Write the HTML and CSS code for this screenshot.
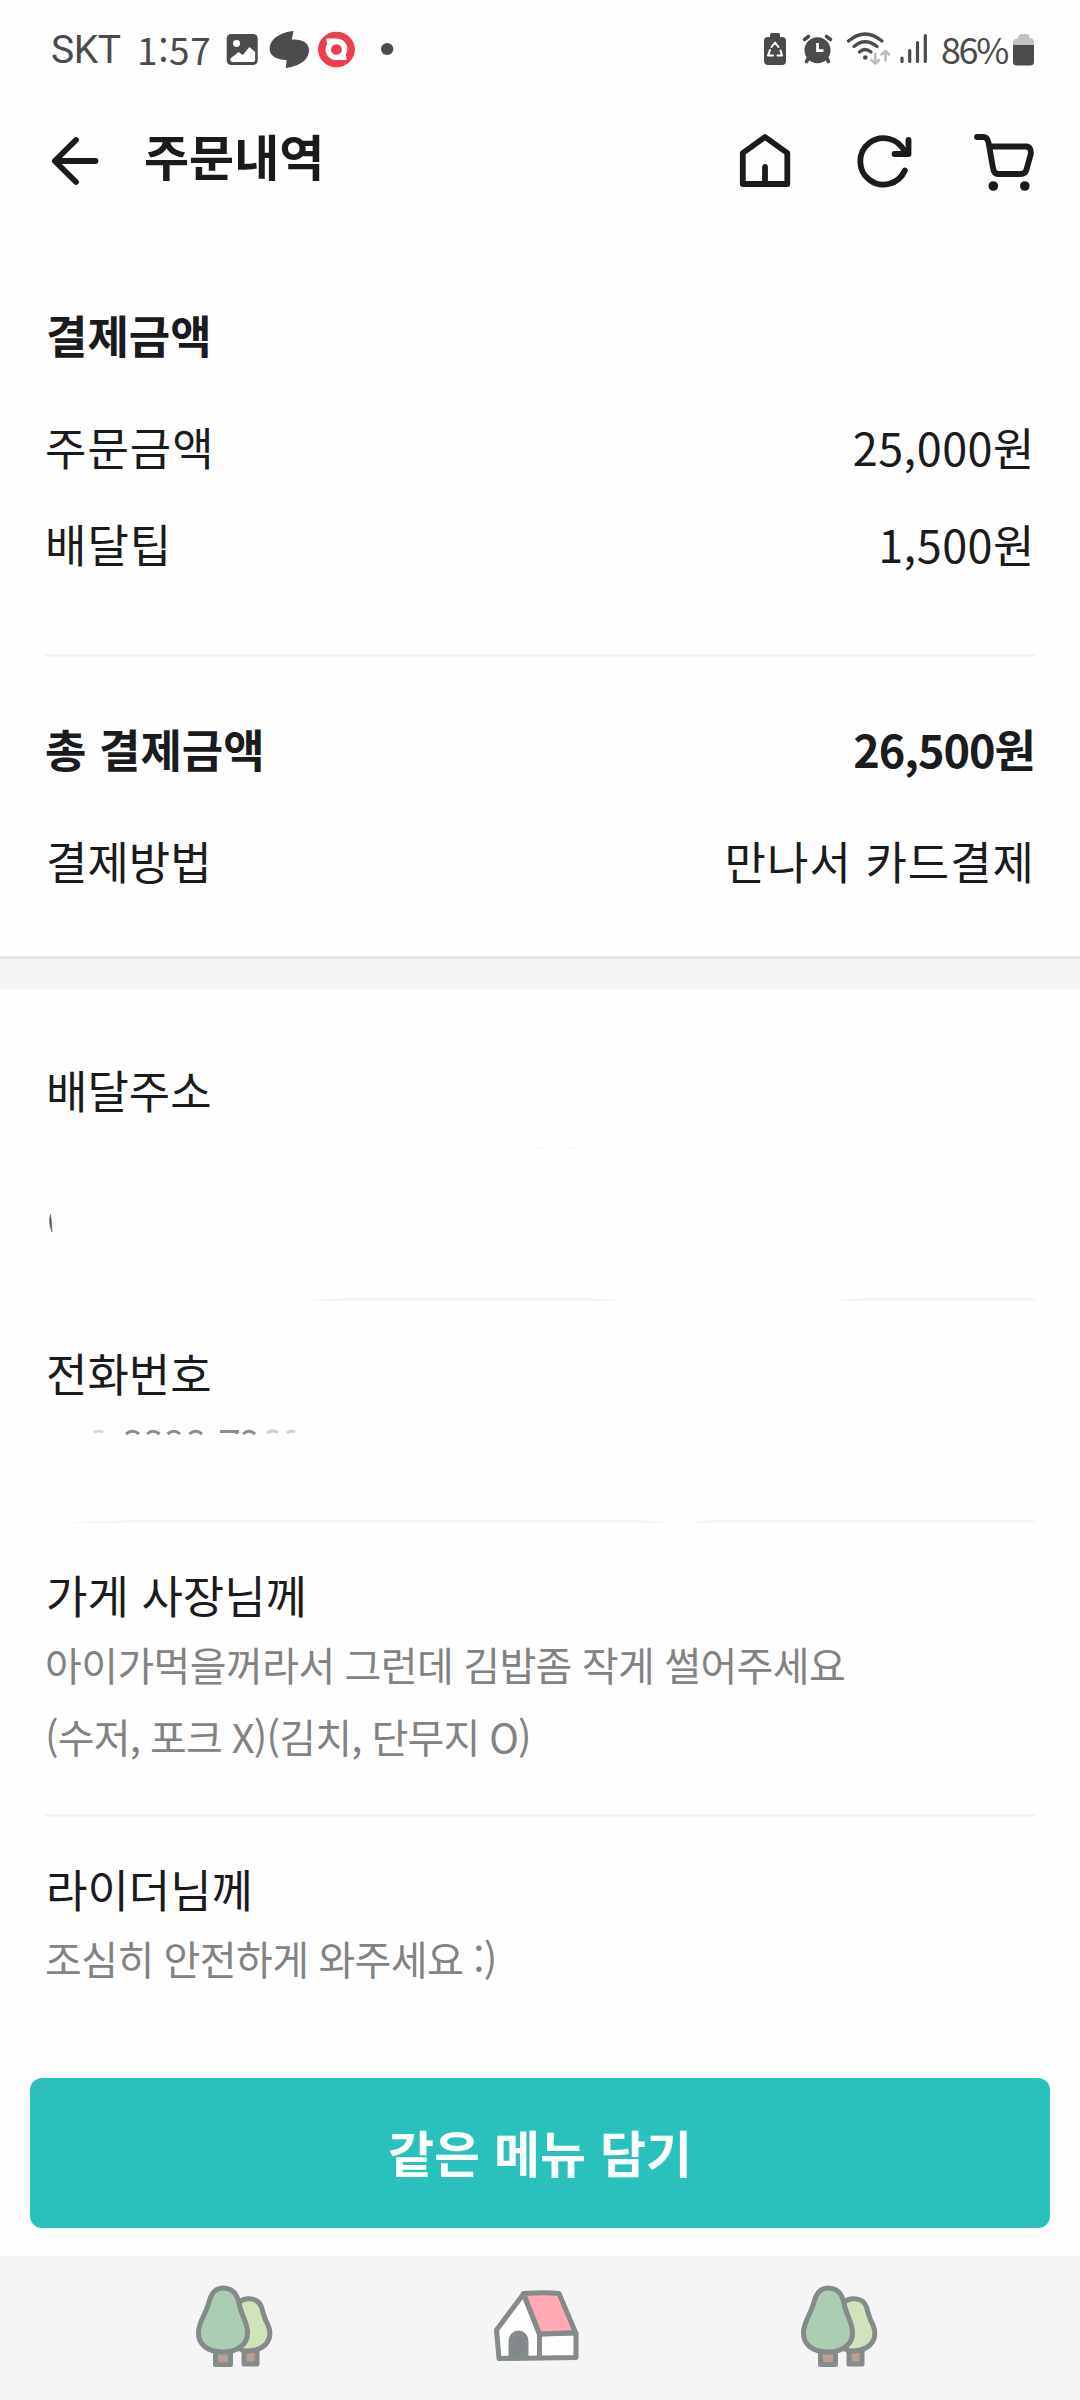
FILE: index.html
```html
<!DOCTYPE html>
<html lang="ko">
<head>
<meta charset="utf-8">
<title>주문내역</title>
<link rel="stylesheet" href="styles.css">
</head>
<body>
<div class="screen">
  <div class="status">
    <span class="carrier">SKT</span>
    <span class="clock">1:57</span>
    <svg class="st-left" width="176" height="44" viewBox="214 28 170 44" preserveAspectRatio="none">
      <rect x="219.5" y="34" width="30" height="31" rx="4.5" fill="#4b4b4b"/>
      <circle cx="229" cy="43.5" r="3.4" fill="#fff"/>
      <path d="M223 58.5L231 52L235 55L241.500 47L247 52V60Q247 62 245 62H225Q223 62 223 60Z" fill="#fff"/>
      <path d="M284 31L282.300 39.700C292 39 299 43 299 50C299 61 288 66.500 276.500 68L277.500 60C268 60 261 56 261 49C261 39 271 32.500 284 31Z" fill="#4b4b4b"/>
      <circle cx="325.500" cy="49.500" r="17.800" fill="#ea404c"/>
      <path d="M315.500 38.500H326A10.500 10.500 0 0 1 334.500 54.500L335.500 60H325A10.500 10.500 0 0 1 316.500 44Z" fill="#fff"/>
      <circle cx="325.500" cy="49.500" r="5.300" fill="#ea404c"/>
      <circle cx="374.500" cy="49" r="6" fill="#4b4b4b"/>
    </svg>
    <svg class="st-right" width="172" height="44" viewBox="760 28 172 44">
      <path d="M770 37V35Q770 33 772 33H778Q780 33 780 35V37H782Q786 37 786 41V61Q786 65 782 65H768Q764 65 764 61V41Q764 37 768 37Z" fill="#4b4b4b"/>
      <path d="M771.500 47L775 42.500L778.500 47M780.500 50.500L782 55.500H777.500M773 55.500H768L770 50" fill="none" stroke="#fff" stroke-width="2" stroke-linecap="round" stroke-linejoin="round"/>
      <g stroke="#4b4b4b" stroke-width="3.600" stroke-linecap="round"><path d="M804.500 39.500L808.500 36.500M826.500 36.500L830.500 39.500M808.500 58L806.500 61.500M826.500 58L828.500 61.500"/></g>
      <circle cx="817.500" cy="50.300" r="13" fill="#4b4b4b"/>
      <path d="M817.500 43V50.700H823.500" fill="none" stroke="#fff" stroke-width="2.700"/>
      <g fill="none" stroke="#4b4b4b" stroke-width="3.200" stroke-linecap="round"><path d="M848.500 41Q865 27 882 41M854 46.500Q865 37 877 46.500M859.500 52Q865 47 871 52"/></g>
      <circle cx="865.300" cy="57.500" r="2.300" fill="#4b4b4b"/>
      <path d="M875.300 54V63M871.500 60L875.300 63.500L879 60M885.500 60.500V51.500M881.500 54.500L885.500 51L889 54.500" fill="none" stroke="#bdbdbd" stroke-width="2.700" stroke-linecap="round" stroke-linejoin="round"/>
      <path d="M902 58V61.500M909.700 50.500V61.500M917.500 42.500V61.500M925.300 35.500V61.500" stroke="#4b4b4b" stroke-width="3.200" stroke-linecap="round"/>
    </svg>
    <span class="percent">86%</span>
    <svg class="batt" width="22" height="34" viewBox="1013 32 22 34">
      <path d="M1018 37.500Q1018.500 33 1021 33H1027Q1029.500 33 1029.500 37Q1034 37 1034 41V45H1013V41Q1013 37.500 1018 37.500Z" fill="#c3c3c3"/>
      <path d="M1013 44H1034V61Q1034 64.500 1030 64.500H1017Q1013 64.500 1013 61Z" fill="#4b4b4b"/>
    </svg>
  </div>

  <div class="appbar">
    <svg width="54" height="56" viewBox="48 133 54 56" class="ico"><path d="M95.500 161H55.500M76 140L54.800 161L76 182"/></svg>
    <h1 class="title">주문내역</h1>
    <svg width="52" height="60" viewBox="739 131 52 60" class="ico home"><path d="M765 137L742.800 153V184H787.300V153ZM765 167V184"/></svg>
    <svg width="60" height="60" viewBox="855 131 60 60" class="ico refresh"><path d="M904.800 170.500A23.200 23.200 0 1 1 904.500 151.500M908.500 140V154H894.500"/></svg>
    <svg width="66" height="60" viewBox="972 133 66 60" class="ico cart"><path d="M977 137H983Q987.500 137 988.500 142.500L993 168Q993.800 174 998.500 174H1020.500Q1025.500 174 1026.500 169.500L1030.800 154Q1031.500 147 1026 146.500H989.500"/><circle cx="993.300" cy="186" r="4.800"/><circle cx="1024.800" cy="186" r="4.800"/></svg>
  </div>

  <section class="pay">
    <h2 class="row head tight">결제금액</h2>
    <div class="row r1"><span class="wide">주문금액</span><span class="price">25,000원</span></div>
    <div class="row r2"><span class="wide">배달팁</span><span class="price">1,500원</span></div>
    <hr class="line">
    <div class="row total"><span>총 결제금액</span><span class="sum">26,500원</span></div>
    <div class="row method"><span class="tight">결제방법</span><span class="way">만나서 카드결제</span></div>
  </section>
  <div class="band"></div>

  <section class="info">
    <h3 class="label address">배달주소</h3>
    <svg class="hidden-address" width="990" height="178" viewBox="45 1123 990 178">
      <path d="M50.500 1214Q48 1223 52 1232Q52 1222 50.500 1214Z" fill="#555" stroke="#777" stroke-width=".7"/>
      <path d="M524 1148.500H532M538 1148.500H548M564 1148.500H574" stroke="#f4f4f4" stroke-width="1"/>
      <path d="M305 1301L345 1298H590L625 1301Z" fill="#f3f5f5"/>
      <path d="M835 1301L860 1298H1035V1301Z" fill="#f3f5f5"/>
    </svg>
    <h3 class="label phone">전화번호</h3>
    <svg class="hidden-phone" width="990" height="120" viewBox="45 1403 990 120">
      <g fill="none" stroke-width="3">
        <path d="M94 1432.500Q98.500 1429.500 103 1432.500" stroke="#d8d8d8"/>
        <path d="M126 1434Q132.500 1428.500 139 1434M147 1434Q153 1428.500 159.500 1434M167.500 1434Q174 1428.500 180 1434M189.500 1434Q195.500 1428.500 202 1434" stroke="#8c8c8c"/>
        <path d="M220 1431.500H239M236.500 1431V1434M243 1434Q249 1428.500 255 1434" stroke="#8c8c8c"/>
        <path d="M267 1433Q272.500 1429 278 1432.500M287 1433Q291 1430 295 1432" stroke="#cfcfcf"/>
      </g>
      <path d="M60 1523L130 1520H640L672 1523ZM690 1523L710 1520H1035V1523Z" fill="#f2f4f7"/>
    </svg>
    <h3 class="label owner">가게 사장님께</h3>
    <p class="note">아이가먹을꺼라서 그런데 김밥좀 작게 썰어주세요<br><span class="extra">(수저, 포크 X)(김치, 단무지 O)</span></p>
    <hr class="line">
    <h3 class="label rider">라이더님께</h3>
    <p class="note">조심히 안전하게 와주세요 :)</p>
  </section>

  <button class="cta">같은 메뉴 담기</button>

  <nav class="nav">
    <svg width="82" height="86" viewBox="194 2283 82 86" class="pic">
      <path d="M244 2350V2364H257V2350Z" fill="#b8a093"/>
      <path d="M215.500 2350V2364.500H230.500V2350Z" fill="#b8a093"/>
      <path d="M239 2302C245 2297 258 2297 261.500 2307C264 2316 264 2318 268 2325C273 2337 268 2350 248 2351C236 2351 232 2345 239 2302Z" fill="#d0e3bb"/>
      <path d="M223 2288C232 2288 237 2293 239 2303C241 2315 247 2321 247.500 2332C248 2344 238 2352 223 2352C207 2352 198 2344 198.500 2332C199 2321 206 2314 209 2302C211 2294 215 2288 223 2288Z" fill="#abceb3"/>
    </svg>
    <svg width="90" height="76" viewBox="491 2289 90 76" class="pic house">
      <path d="M523.500 2295L496.500 2331L499 2359.500L576 2358.500V2334L539.500 2335Z" fill="#fdfdfd"/>
      <path d="M523.500 2294.500Q545 2293 559 2294.500L575.500 2333.500L539.500 2335Z" fill="#ffaab4"/>
      <path d="M539.500 2335V2358"/>
      <path d="M511 2358V2343C511 2331 526 2331 526 2343V2358Z" fill="#80888b"/>
    </svg>
    <svg width="82" height="86" viewBox="194 2283 82 86" class="pic">
      <path d="M244 2350V2364H257V2350Z" fill="#b8a093"/>
      <path d="M215.500 2350V2364.500H230.500V2350Z" fill="#b8a093"/>
      <path d="M239 2302C245 2297 258 2297 261.500 2307C264 2316 264 2318 268 2325C273 2337 268 2350 248 2351C236 2351 232 2345 239 2302Z" fill="#d0e3bb"/>
      <path d="M223 2288C232 2288 237 2293 239 2303C241 2315 247 2321 247.500 2332C248 2344 238 2352 223 2352C207 2352 198 2344 198.500 2332C199 2321 206 2314 209 2302C211 2294 215 2288 223 2288Z" fill="#abceb3"/>
    </svg>
  </nav>
</div>
</body>
</html>
```
FILE: styles.css
```css
* { box-sizing: border-box; margin: 0; padding: 0; }
body {
  background: #fefefe;
  color: #1a1b1c;
  font-family: "Noto Sans CJK KR", sans-serif;
  font-size: 45px;
}
svg { display: block; flex: none; }
.screen { width: 1080px; height: 2400px; display: flex; flex-direction: column; overflow: hidden; }
.screen > * { flex: none; }

.status { height: 100px; display: flex; align-items: center; padding-left: 51px; color: #4b4b4b; white-space: nowrap; }
.carrier { width: 86px; font: 39px/44px Roboto, sans-serif; letter-spacing: -0.4px; }
.clock { width: 84px; font: 37px/44px "Noto Sans CJK KR", sans-serif; letter-spacing: 0.6px; padding-bottom: 3px; }
.st-right { margin-left: 363px; }
.percent { width: 81px; padding: 0 0 4px 9px; font: 36px/44px "Noto Sans CJK KR", sans-serif; letter-spacing: -2.4px; }

.appbar { height: 122px; display: flex; align-items: center; padding-left: 48px; }
.ico { fill: none; stroke: #1a1b1c; stroke-width: 5.8; stroke-linecap: round; stroke-linejoin: round; }
.ico circle { fill: #1a1b1c; stroke: none; }
.title { width: 596px; margin-left: 41px; font-size: 49px; line-height: 60px; font-weight: 700; padding: 0 0 12px 1px; }
.refresh { margin-left: 64px; }
.cart { margin: 4px 0 0 57px; }

.pay { height: 734px; padding: 78px 45px 0; }
.row { display: flex; justify-content: space-between; height: 70px; line-height: 70px; font-size: 45px; white-space: nowrap; }
.tight { padding-left: 1px; }
.wide { letter-spacing: 1px; }
.price { letter-spacing: 0.5px; }
.sum { letter-spacing: -1px; }
.way { letter-spacing: 1px; }
.head { font-weight: 700; }
.r1 { margin-top: 42px; }
.r2 { margin-top: 27px; }
.line { border: 0; height: 3px; background: #f2f4f5; }
.pay .line { margin-top: 75px; }
.total { margin-top: 57px; font-weight: 700; }
.method { margin-top: 42px; }
.band { height: 33px; background: #f3f4f6; border-top: 3px solid #e3e4e6; }

.info { height: 1089px; padding: 68px 45px 0; }
.label { font-size: 45px; font-weight: 400; line-height: 66px; height: 66px; padding-left: 1px; }
.phone { margin-top: 39px; }
.owner { margin-top: 39px; }
.hidden-phone { margin-top: -3px; }
.note { color: #828282; font-size: 40px; line-height: 72px; letter-spacing: -0.6px; word-spacing: -0.6px; white-space: nowrap; }
.extra { letter-spacing: -0.8px; }
.info .line { margin-top: 42px; }
.rider { margin-top: 39px; }

.cta {
  width: 1020px; height: 150px; margin: 0 30px 28px; padding-bottom: 4px;
  border: 0; border-radius: 12px; background: #2ac1bc; color: #fff;
  font: 700 50px/70px "Noto Sans CJK KR", sans-serif;
}
.nav { height: 144px; background: #f5f5f5; display: flex; justify-content: space-between; align-items: center; padding: 0 199px 4px 194px; }
.pic { fill: none; stroke: #858a8a; stroke-width: 5; stroke-linejoin: round; }
.house { margin-right: 4px; }
```
